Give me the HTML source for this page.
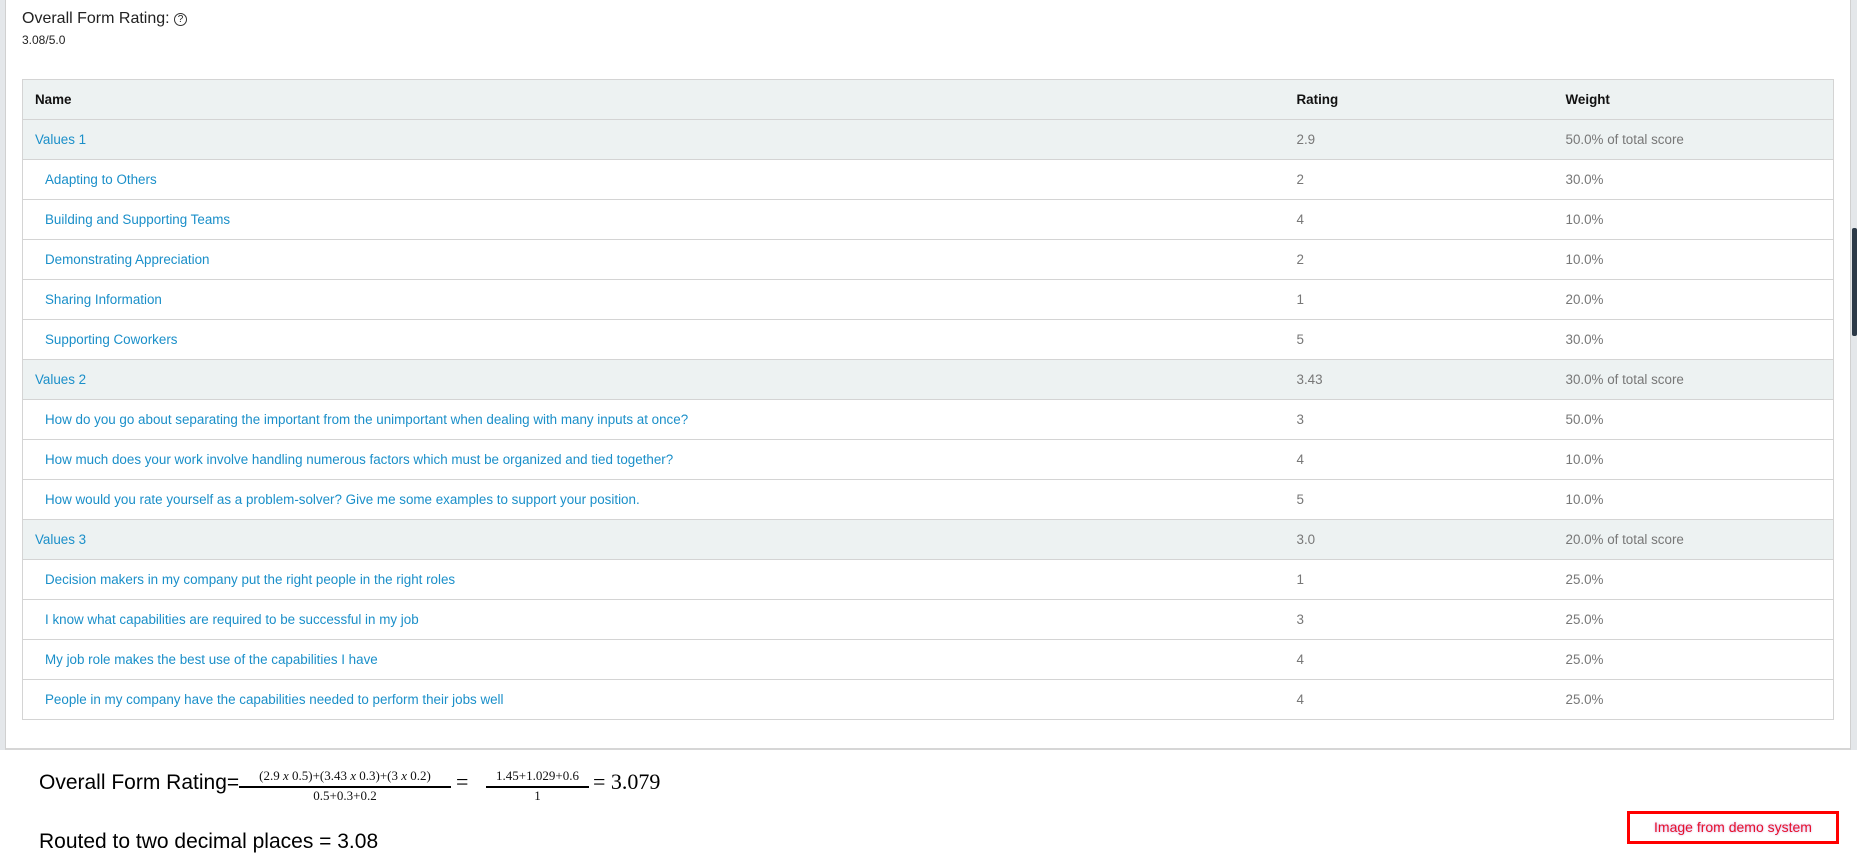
<!DOCTYPE html>
<html><head><meta charset="utf-8"><style>
*{margin:0;padding:0;box-sizing:border-box}
body{width:1857px;height:864px;background:#fff;position:relative;overflow:hidden;font-family:"Liberation Sans",Arial,sans-serif}
.strip{position:absolute;left:0;top:0;width:5px;height:750px;background:#e4e7ea}
.panel{position:absolute;left:5px;top:0;width:1846px;height:750px;border-left:1px solid #d0d0d0;border-right:1px solid #d0d0d0;border-bottom:2px solid #d6d6d6;background:#fff}
.sb{position:absolute;left:1851px;top:0;width:6px;height:750px;background:#e4e7ea}
.thumb{position:absolute;left:1852px;top:228px;width:5px;height:108px;background:#2d3a48;border-radius:2px}
.t1{position:absolute;left:22px;top:10px;font-size:16px;color:#222}
.t2{position:absolute;left:22px;top:33px;font-size:12px;color:#222}
table{position:absolute;left:22px;top:79px;width:1812px;border-collapse:collapse;font-size:13.4px}
td,th{height:40px;border:1px solid #d4d4d4;border-left:none;border-right:none;text-align:left;font-weight:normal;padding:0}
table{border-left:1px solid #d4d4d4;border-right:1px solid #d4d4d4}
th{background:#edf2f2;color:#111;font-weight:bold}
tr.g td{background:#edf2f2}
td.n{color:#1a8fc9;padding-left:12px}
tr.s td.n{padding-left:22px}
th.n{padding-left:12px}
td.r,td.w{color:#777}
.c1{width:1274px}.c2{width:269px}
.f{position:absolute;font-family:"Liberation Sans Narrow","Liberation Sans",sans-serif;font-size:21px;color:#000}
.fr{position:absolute;font-family:"Liberation Serif",serif;font-size:13px;text-align:center;color:#111}
.fr .nu{border-bottom:2px solid #000;padding-bottom:1px;height:20px}
.fr .de{padding-top:0}
.box{position:absolute;left:1627px;top:811px;width:212px;height:33px;border:3px solid #f00;color:#e8102a;font-size:14px;text-align:center;line-height:27px;text-shadow:0 0 2px #c8a0e0}
</style></head><body>
<div class="strip"></div>
<div class="panel"></div>
<div class="sb"></div><div class="thumb"></div>
<div class="t1">Overall Form Rating: <span style="display:inline-block;width:13px;height:13px;border:1px solid #333;border-radius:50%;font-size:10px;text-align:center;line-height:11px;vertical-align:1px">?</span></div>
<div class="t2">3.08/5.0</div>
<table>
<tr><th class="n c1">Name</th><th class="c2">Rating</th><th>Weight</th></tr>
<tr class="g"><td class="n">Values 1</td><td class="r">2.9</td><td class="w">50.0% of total score</td></tr>
<tr class="s"><td class="n">Adapting to Others</td><td class="r">2</td><td class="w">30.0%</td></tr>
<tr class="s"><td class="n">Building and Supporting Teams</td><td class="r">4</td><td class="w">10.0%</td></tr>
<tr class="s"><td class="n">Demonstrating Appreciation</td><td class="r">2</td><td class="w">10.0%</td></tr>
<tr class="s"><td class="n">Sharing Information</td><td class="r">1</td><td class="w">20.0%</td></tr>
<tr class="s"><td class="n">Supporting Coworkers</td><td class="r">5</td><td class="w">30.0%</td></tr>
<tr class="g"><td class="n">Values 2</td><td class="r">3.43</td><td class="w">30.0% of total score</td></tr>
<tr class="s"><td class="n">How do you go about separating the important from the unimportant when dealing with many inputs at once?</td><td class="r">3</td><td class="w">50.0%</td></tr>
<tr class="s"><td class="n">How much does your work involve handling numerous factors which must be organized and tied together?</td><td class="r">4</td><td class="w">10.0%</td></tr>
<tr class="s"><td class="n">How would you rate yourself as a problem-solver? Give me some examples to support your position.</td><td class="r">5</td><td class="w">10.0%</td></tr>
<tr class="g"><td class="n">Values 3</td><td class="r">3.0</td><td class="w">20.0% of total score</td></tr>
<tr class="s"><td class="n">Decision makers in my company put the right people in the right roles</td><td class="r">1</td><td class="w">25.0%</td></tr>
<tr class="s"><td class="n">I know what capabilities are required to be successful in my job</td><td class="r">3</td><td class="w">25.0%</td></tr>
<tr class="s"><td class="n">My job role makes the best use of the capabilities I have</td><td class="r">4</td><td class="w">25.0%</td></tr>
<tr class="s"><td class="n">People in my company have the capabilities needed to perform their jobs well</td><td class="r">4</td><td class="w">25.0%</td></tr>
</table>
<div class="f" style="left:39px;top:771px">Overall Form Rating=</div>
<div class="fr" style="left:239px;top:768px;width:212px"><div class="nu">(2.9 <i>x</i> 0.5)+(3.43 <i>x</i> 0.3)+(3 <i>x</i> 0.2)</div><div class="de">0.5+0.3+0.2</div></div>
<div class="f" style="left:456px;top:769px;font-family:'Liberation Serif',serif;font-size:22px">=</div>
<div class="fr" style="left:486px;top:768px;width:103px"><div class="nu">1.45+1.029+0.6</div><div class="de">1</div></div>
<div class="f" style="left:593px;top:769px;font-family:'Liberation Serif',serif;font-size:22px">= 3.079</div>
<div class="f" style="left:39px;top:830px">Routed to two decimal places = 3.08</div>
<div class="box">Image from demo system</div>
</body></html>
